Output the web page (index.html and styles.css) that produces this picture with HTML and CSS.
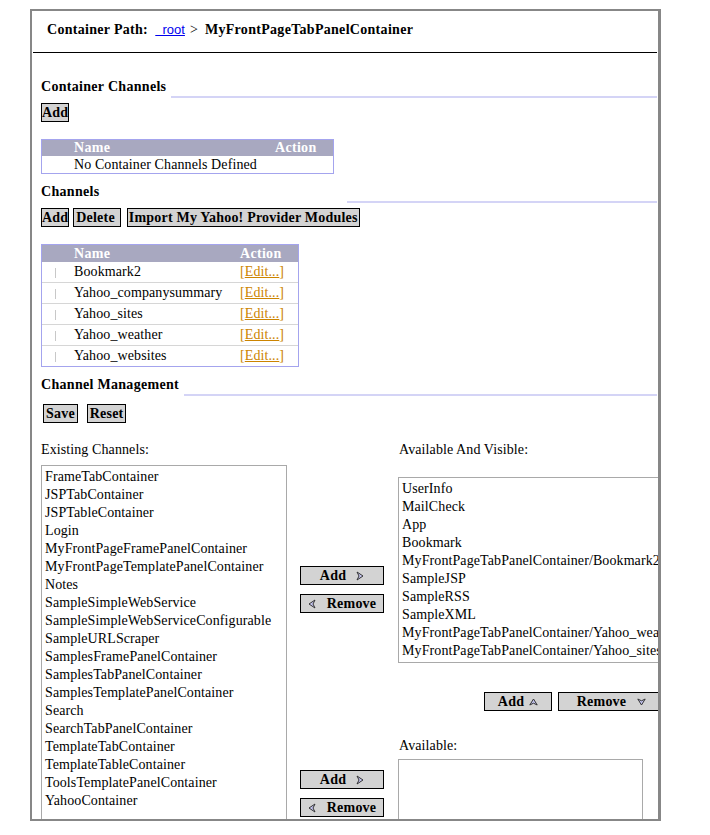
FILE: index.html
```html
<!DOCTYPE html>
<html>
<head>
<meta charset="utf-8">
<title>Container Channels</title>
<link rel="stylesheet" href="styles.css">
</head>
<body>
<div class="frame">
  <div class="path">
    <b>Container Path:</b>&nbsp;&nbsp;<a class="path-link" href="#">&nbsp;&nbsp;root</a><span class="path-sep">&gt;</span><b>MyFrontPageTabPanelContainer</b>
  </div>

  <div class="sec sec-first"><div class="sec-title">Container Channels</div><div class="sec-rule"></div></div>
  <div class="btn-row"><button class="btn">Add</button></div>
  <table class="grid grid-cc">
    <colgroup><col class="c-sel"><col class="c-name-cc"><col></colgroup>
    <thead><tr><th></th><th>Name</th><th>Action</th></tr></thead>
    <tbody><tr><td></td><td>No Container Channels Defined</td><td></td></tr></tbody>
  </table>

  <div class="sec"><div class="sec-title sec-title-wide">Channels</div><div class="sec-rule"></div></div>
  <div class="btn-row">
    <button class="btn">Add</button>
    <button class="btn btn-delete">Delete</button>
    <button class="btn btn-import">Import My Yahoo! Provider Modules</button>
  </div>
  <table class="grid grid-ch">
    <colgroup><col class="c-sel"><col class="c-name-ch"><col></colgroup>
    <thead><tr><th></th><th>Name</th><th>Action</th></tr></thead>
    <tbody>
      <tr><td><span class="tick"></span></td><td>Bookmark2</td><td><a class="edit" href="#">[<span class="edit-text">Edit...</span>]</a></td></tr>
      <tr><td><span class="tick"></span></td><td>Yahoo_companysummary</td><td><a class="edit" href="#">[<span class="edit-text">Edit...</span>]</a></td></tr>
      <tr><td><span class="tick"></span></td><td>Yahoo_sites</td><td><a class="edit" href="#">[<span class="edit-text">Edit...</span>]</a></td></tr>
      <tr><td><span class="tick"></span></td><td>Yahoo_weather</td><td><a class="edit" href="#">[<span class="edit-text">Edit...</span>]</a></td></tr>
      <tr><td><span class="tick"></span></td><td>Yahoo_websites</td><td><a class="edit" href="#">[<span class="edit-text">Edit...</span>]</a></td></tr>
    </tbody>
  </table>

  <div class="sec"><div class="sec-title">Channel Management</div><div class="sec-rule"></div></div>
  <div class="btn-row btn-row-save">
    <button class="btn btn-pad">Save</button>
    <button class="btn btn-pad">Reset</button>
  </div>

  <div class="mgmt">
    <div class="col-left">
      <div class="lbl">Existing Channels:</div>
      <div class="listbox listbox-existing">
        <div>FrameTabContainer</div>
        <div>JSPTabContainer</div>
        <div>JSPTableContainer</div>
        <div>Login</div>
        <div>MyFrontPageFramePanelContainer</div>
        <div>MyFrontPageTemplatePanelContainer</div>
        <div>Notes</div>
        <div>SampleSimpleWebService</div>
        <div>SampleSimpleWebServiceConfigurable</div>
        <div>SampleURLScraper</div>
        <div>SamplesFramePanelContainer</div>
        <div>SamplesTabPanelContainer</div>
        <div>SamplesTemplatePanelContainer</div>
        <div>Search</div>
        <div>SearchTabPanelContainer</div>
        <div>TemplateTabContainer</div>
        <div>TemplateTableContainer</div>
        <div>ToolsTemplatePanelContainer</div>
        <div>YahooContainer</div>
      </div>
    </div>

    <div class="col-right">
      <div class="pair">
        <div class="mid mid-top">
          <button class="btn btn-mid">Add<svg class="ico ico-after" width="8" height="10" viewBox="0 0 8 10"><path d="M1 1 L7 5 L1 9 L3 5 Z" fill="#c6c6f2" stroke="#333" stroke-width="1" stroke-linejoin="round"/></svg></button>
          <button class="btn btn-mid"><svg class="ico ico-before" width="8" height="10" viewBox="0 0 8 10"><path d="M7 1 L1 5 L7 9 L5 5 Z" fill="#c6c6f2" stroke="#333" stroke-width="1" stroke-linejoin="round"/></svg>Remove</button>
        </div>
        <div class="target">
          <div class="lbl">Available And Visible:</div>
          <div class="listbox listbox-visible">
            <div>UserInfo</div>
            <div>MailCheck</div>
            <div>App</div>
            <div>Bookmark</div>
            <div>MyFrontPageTabPanelContainer/Bookmark2</div>
            <div>SampleJSP</div>
            <div>SampleRSS</div>
            <div>SampleXML</div>
            <div>MyFrontPageTabPanelContainer/Yahoo_weather</div>
            <div>MyFrontPageTabPanelContainer/Yahoo_sites</div>
          </div>
        </div>
      </div>

      <div class="updown">
        <button class="btn btn-up">Add<svg class="ico ico-up" width="9" height="8" viewBox="0 0 9 8"><path d="M0.8 7 L4.5 1 L8.2 7 L4.5 5.2 Z" fill="#c6c6f2" stroke="#333" stroke-width="1" stroke-linejoin="round"/></svg></button>
        <button class="btn btn-down">Remove<svg class="ico ico-down" width="9" height="8" viewBox="0 0 9 8"><path d="M0.8 1 L4.5 7 L8.2 1 L4.5 2.8 Z" fill="#c6c6f2" stroke="#333" stroke-width="1" stroke-linejoin="round"/></svg></button>
      </div>

      <div class="pair pair-bottom">
        <div class="mid mid-bottom">
          <button class="btn btn-mid">Add<svg class="ico ico-after" width="8" height="10" viewBox="0 0 8 10"><path d="M1 1 L7 5 L1 9 L3 5 Z" fill="#c6c6f2" stroke="#333" stroke-width="1" stroke-linejoin="round"/></svg></button>
          <button class="btn btn-mid"><svg class="ico ico-before" width="8" height="10" viewBox="0 0 8 10"><path d="M7 1 L1 5 L7 9 L5 5 Z" fill="#c6c6f2" stroke="#333" stroke-width="1" stroke-linejoin="round"/></svg>Remove</button>
        </div>
        <div class="target">
          <div class="lbl">Available:</div>
          <div class="listbox listbox-avail"></div>
        </div>
      </div>
    </div>
  </div>
</div>
</body>
</html>
```

FILE: styles.css
```css
html, body {
  margin: 0;
  padding: 0;
  background: #ffffff;
}

body {
  font-family: "Liberation Serif", "Times New Roman", serif;
  font-size: 14px;
  line-height: 17px;
  letter-spacing: 0.1px;
  color: #000000;
}

b {
  letter-spacing: 0.3px;
}

.frame {
  margin: 9px 0 0 30px;
  width: 626px;
  height: 808px;
  border: 2px solid #878787;
  border-right-width: 3px;
  overflow: hidden;
}

/* container path */
.path {
  margin: 0 1px;
  padding: 10px 14px 14px;
  height: 17px;
  border-bottom: 1px solid #000000;
  white-space: nowrap;
  overflow: hidden;
}

.path-link {
  font-family: "Liberation Sans", Arial, sans-serif;
  font-size: 13px;
  line-height: 17px;
  letter-spacing: 0;
  color: #0000ee;
  text-decoration: underline;
}

.path-sep {
  margin: 0 7px 0 5px;
}

/* section headers */
.sec {
  display: flex;
  align-items: flex-end;
  margin: 9px 1px 0 9px;
}

.sec-first {
  margin-top: 25px;
}

.sec-title {
  font-weight: bold;
  letter-spacing: 0.3px;
  line-height: 17px;
  padding-bottom: 3px;
  white-space: nowrap;
  flex: none;
}

.sec-title-wide {
  width: 301px;
}

.sec-rule {
  flex: 1;
  height: 2px;
  margin-left: 5px;
  background: #d4d4f6;
}

/* buttons */
.btn-row {
  display: flex;
  gap: 4px;
  margin: 5px 0 0 9px;
}

.btn-row-save {
  margin: 8px 0 0 11px;
  gap: 9px;
}

.btn {
  font-family: "Liberation Serif", "Times New Roman", serif;
  font-size: 14px;
  font-weight: bold;
  letter-spacing: 0.2px;
  line-height: 17px;
  color: #000000;
  background: #d3d3d3;
  border: 1px solid #000000;
  border-radius: 0;
  padding: 0;
  margin: 0;
  white-space: nowrap;
  height: 19px;
}

.btn-delete {
  padding: 0 5px 0 2px;
}

.btn-import {
  margin-left: 2px;
  padding: 0 1px;
}

.btn-pad {
  padding: 0 2px;
}

/* tables */
.grid {
  box-sizing: border-box;
  table-layout: fixed;
  border-collapse: separate;
  border-spacing: 0;
  border: 1px solid #a4a4ee;
  margin: 17px 0 0 9px;
}

.grid-cc {
  width: 293px;
}

.grid-ch {
  width: 258px;
}

.c-sel {
  width: 32px;
}

.c-name-cc {
  width: 201px;
}

.c-name-ch {
  width: 166px;
}

.grid th {
  background: #a8a8c0;
  color: #ffffff;
  font-weight: bold;
  letter-spacing: 0.3px;
  text-align: left;
  padding: 0;
  line-height: 16px;
  white-space: nowrap;
}

.grid td {
  padding: 0;
  line-height: 17px;
  white-space: nowrap;
}

.grid-ch th {
  line-height: 17px;
}

.grid-ch td {
  line-height: 20px;
  border-bottom: 1px solid #d6d6d6;
}

.grid-ch tr:last-child td {
  border-bottom: none;
}

.tick {
  display: inline-block;
  width: 1px;
  height: 10px;
  margin-left: 13px;
  background: #c8c8c8;
  vertical-align: -2px;
}

.edit {
  color: #cc8400;
  text-decoration: none;
}

.edit-text {
  text-decoration: underline;
}

/* channel management */
.mgmt {
  display: flex;
  align-items: flex-start;
  margin: 18px 0 0 9px;
}

.col-left {
  width: 246px;
  flex: none;
}

.lbl {
  line-height: 17px;
  white-space: nowrap;
}

.listbox {
  box-sizing: border-box;
  border: 1px solid #a9a9a9;
  padding: 2px 0 0 3px;
  line-height: 18px;
  white-space: nowrap;
  overflow: hidden;
  background: #ffffff;
}

.listbox-existing {
  margin-top: 7px;
  width: 246px;
  height: 420px;
}

.col-right {
  flex: none;
  margin-left: 13px;
}

.pair {
  display: flex;
  align-items: flex-start;
}

.pair-bottom {
  margin-top: 26px;
}

.mid {
  width: 84px;
  flex: none;
  display: flex;
  flex-direction: column;
  gap: 9px;
}

.mid-top {
  padding-top: 125px;
}

.mid-bottom {
  padding-top: 33px;
}

.btn-mid {
  width: 84px;
}

.target {
  margin-left: 14px;
}

.target .lbl {
  padding-left: 1px;
}

.listbox-visible {
  margin-top: 19px;
  width: 300px;
  height: 186px;
}

.listbox-avail {
  margin-top: 5px;
  width: 245px;
  height: 120px;
}

.updown {
  display: flex;
  gap: 6px;
  margin: 29px 0 0 184px;
}

.btn-up {
  width: 68px;
}

.btn-down {
  width: 107px;
}

.ico {
  display: inline-block;
  vertical-align: -1px;
}

.ico-after {
  margin-left: 10px;
}

.ico-before {
  margin-right: 11px;
}

.ico-up {
  margin-left: 5px;
  vertical-align: 0;
}

.ico-down {
  margin-left: 11px;
  vertical-align: 0;
}
```
